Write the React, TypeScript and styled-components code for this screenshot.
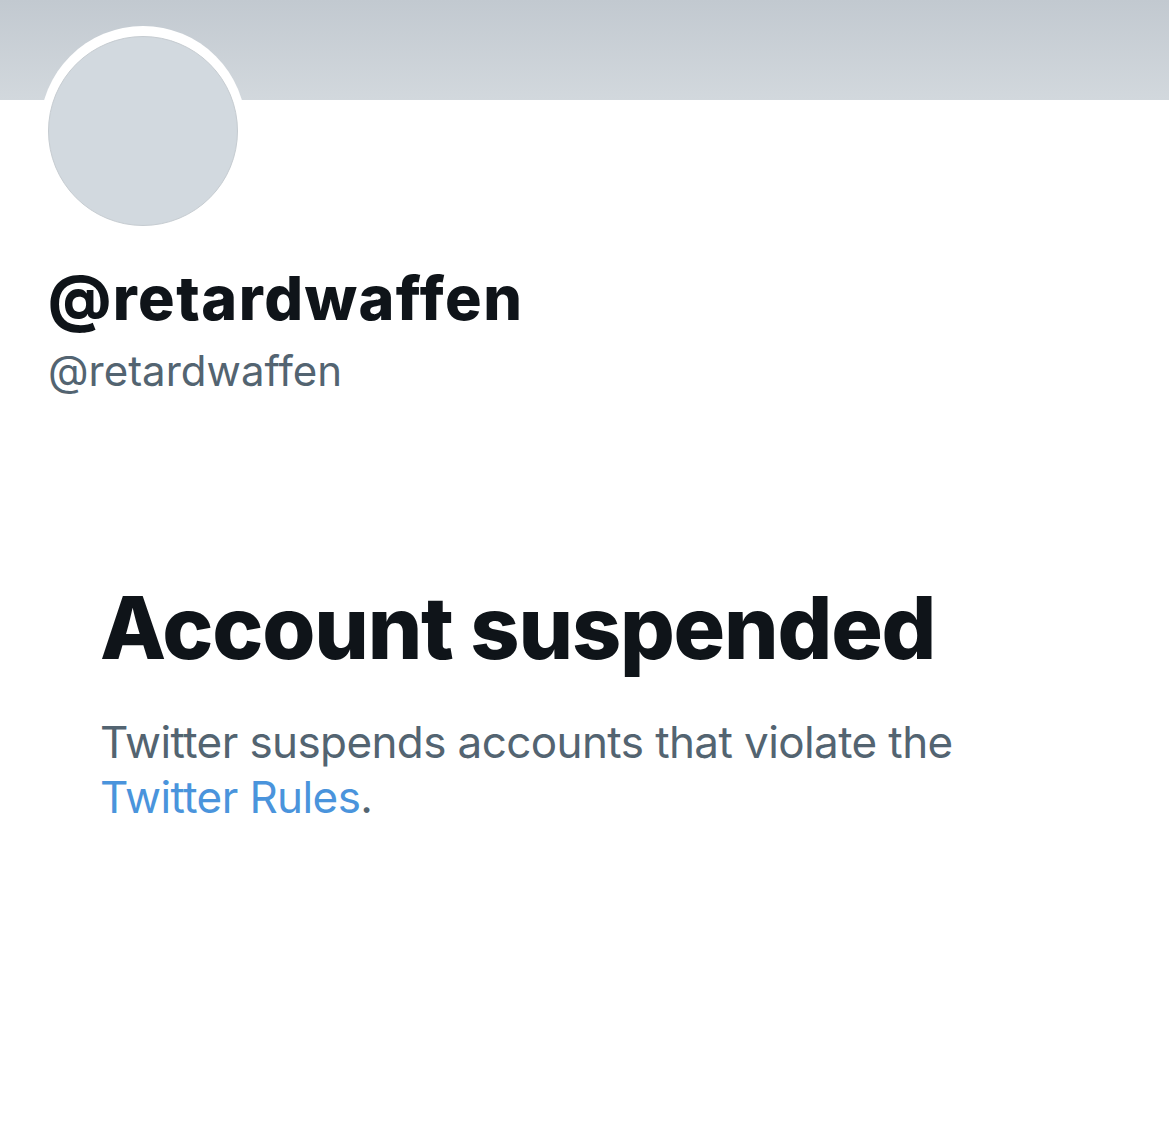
import React from "react";
import styled, { createGlobalStyle } from "styled-components";

const GlobalStyle = createGlobalStyle`
  html, body {
    margin: 0;
    padding: 0;
    background: #ffffff;
    font-family: Inter, "Noto Sans", "Liberation Sans", sans-serif;
  }
`;

const Page = styled.div`
  width: 1169px;
  height: 1123px;
  overflow: hidden;
  background: #ffffff;
`;

const Banner = styled.div`
  height: 100px;
  background: linear-gradient(180deg, #c2c9d0 0%, #d2d8dd 100%);
`;

const Profile = styled.div`
  padding: 0 40px;
  display: flex;
  flex-direction: column;
  align-items: flex-start;
`;

const AvatarRing = styled.div`
  margin-top: -74px;
  width: 206px;
  height: 206px;
  border-radius: 50%;
  background: #ffffff;
  display: flex;
  align-items: center;
  justify-content: center;
`;

const Avatar = styled.div`
  width: 188px;
  height: 188px;
  margin-top: 4px;
  border-radius: 50%;
  background: #d2d9df;
  border: 1px solid #c6ccd1;
`;

const DisplayName = styled.h1`
  margin: 34px 0 0 8px;
  font-size: 61px;
  font-weight: 800;
  letter-spacing: 1.5px;
  line-height: 64px;
  color: #0f1419;
`;

const Handle = styled.div`
  margin: 17px 0 0 8px;
  font-size: 42px;
  line-height: 48px;
  color: #536471;
`;

const Notice = styled.section`
  padding: 183px 0 0 100px;
`;

const NoticeTitle = styled.h2`
  margin: 0;
  font-size: 86px;
  font-weight: 800;
  letter-spacing: -1.2px;
  line-height: 100px;
  color: #0f1419;
`;

const NoticeText = styled.p`
  margin: 37px 0 0;
  width: 880px;
  font-size: 44px;
  letter-spacing: -0.6px;
  line-height: 55px;
  color: #536471;
`;

const RulesLink = styled.a`
  color: #4a94dc;
  text-decoration: none;
`;

export default function App() {
  return (
    <Page>
      <GlobalStyle />
      <Banner />
      <Profile>
        <AvatarRing>
          <Avatar />
        </AvatarRing>
        <DisplayName>@retardwaffen</DisplayName>
        <Handle>@retardwaffen</Handle>
      </Profile>
      <Notice>
        <NoticeTitle>Account suspended</NoticeTitle>
        <NoticeText>
          Twitter suspends accounts that violate the{" "}
          <RulesLink href="#">Twitter Rules</RulesLink>.
        </NoticeText>
      </Notice>
    </Page>
  );
}
